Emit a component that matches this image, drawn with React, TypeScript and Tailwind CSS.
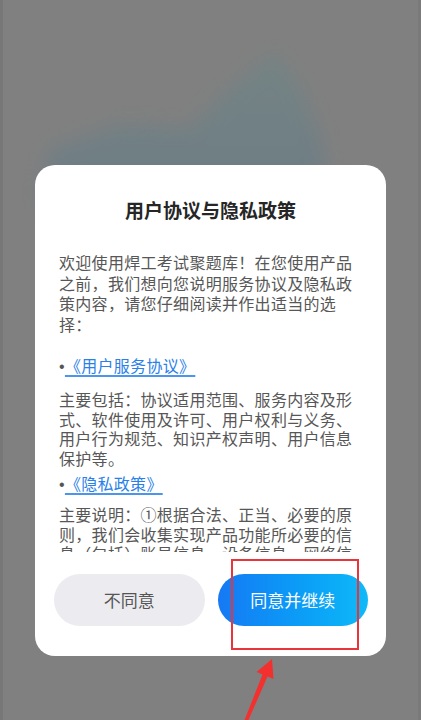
const font = {
  fontFamily: '"Noto Sans CJK SC", "Noto Sans", sans-serif',
};

function Backdrop() {
  return (
    <svg
      className="absolute inset-0"
      width="421"
      height="720"
      viewBox="0 0 421 720"
    >
      <defs>
        <filter id="blur" x="-20%" y="-20%" width="140%" height="140%">
          <feGaussianBlur stdDeviation="9" />
        </filter>
        <linearGradient id="hill" x1="0" y1="0" x2="0" y2="1">
          <stop offset="0" stopColor="#708585" />
          <stop offset="1" stopColor="#6b7c86" />
        </linearGradient>
      </defs>
      <rect x="0" y="0" width="421" height="720" fill="#808080" />
      <rect x="0" y="0" width="3" height="720" fill="#777777" />
      <rect x="418" y="0" width="3" height="720" fill="#7a7a7a" />
      <g filter="url(#blur)" opacity="0.8">
        <path
          d="M275 55 L298 85 L322 140 L328 200 L40 200 L50 150 L120 125 L190 128 L232 88 Z"
          fill="url(#hill)"
        />
      </g>
    </svg>
  );
}

function Arrow() {
  return (
    <svg
      className="absolute inset-0 pointer-events-none"
      width="421"
      height="720"
      viewBox="0 0 421 720"
    >
      <path
        d="M272 659 L256.5 672 L262.5 674.6 L244.5 720 L248.5 720 L267.5 676.6 L273.5 679 Z"
        fill="#f2312f"
      />
    </svg>
  );
}

function DocLink({ title }: { title: string }) {
  return (
    <>
      <span className="font-['Liberation_Sans'] text-[#555]">•</span>
      <a className="text-[#2a7fe8] underline decoration-[1.5px] underline-offset-[3px] decoration-[#4b95ee]">
        {title}
      </a>
    </>
  );
}

export default function App() {
  return (
    <div
      className="relative w-[421px] h-[720px] overflow-hidden bg-[#808080]"
      style={font}
    >
      <Backdrop />

      <div className="relative pt-[165px] px-[35px]">
        <div className="bg-white rounded-[20px] pt-8 pb-[30px] flex flex-col">
          <h1 className="text-center text-[19px] leading-[26px] font-bold text-[#262626]">
            用户协议与隐私政策
          </h1>

          <div className="mt-[29px] h-[300px] overflow-hidden px-6 text-[16px] leading-[20.5px] tracking-[0.3px] text-[#575757]">
            <p>
              欢迎使用焊工考试聚题库！在您使用产品之前，我们想向您说明服务协议及隐私政策内容，请您仔细阅读并作出适当的选择：
            </p>

            <p className="mt-[21px] leading-[20px]">
              <DocLink title="《用户服务协议》" />
            </p>
            <p className="mt-[13px] leading-[19.5px]">
              主要包括：协议适用范围、服务内容及形式、软件使用及许可、用户权利与义务、用户行为规范、知识产权声明、用户信息保护等。
            </p>

            <p className="mt-[5px] leading-[20px]">
              <DocLink title="《隐私政策》" />
            </p>
            <p className="mt-[10px] leading-[19.5px]">
              主要说明：①根据合法、正当、必要的原则，我们会收集实现产品功能所必要的信息（包括）账号信息、设备信息、网络信
            </p>
          </div>

          <div className="mt-[22px] pl-[19px] pr-[18px] flex gap-[13px]">
            <button className="flex-1 h-[52px] rounded-full bg-[#ebebf0] text-[17px] text-[#555]">
              不同意
            </button>
            <button className="flex-1 h-[52px] rounded-full bg-gradient-to-r from-[#1679f4] to-[#10b9f8] text-[17px] text-white">
              同意并继续
            </button>
          </div>
        </div>
      </div>

      <div className="absolute left-[231px] top-[559px] w-[128px] h-[91px] border-2 border-[#e8353b]" />
      <Arrow />
    </div>
  );
}
